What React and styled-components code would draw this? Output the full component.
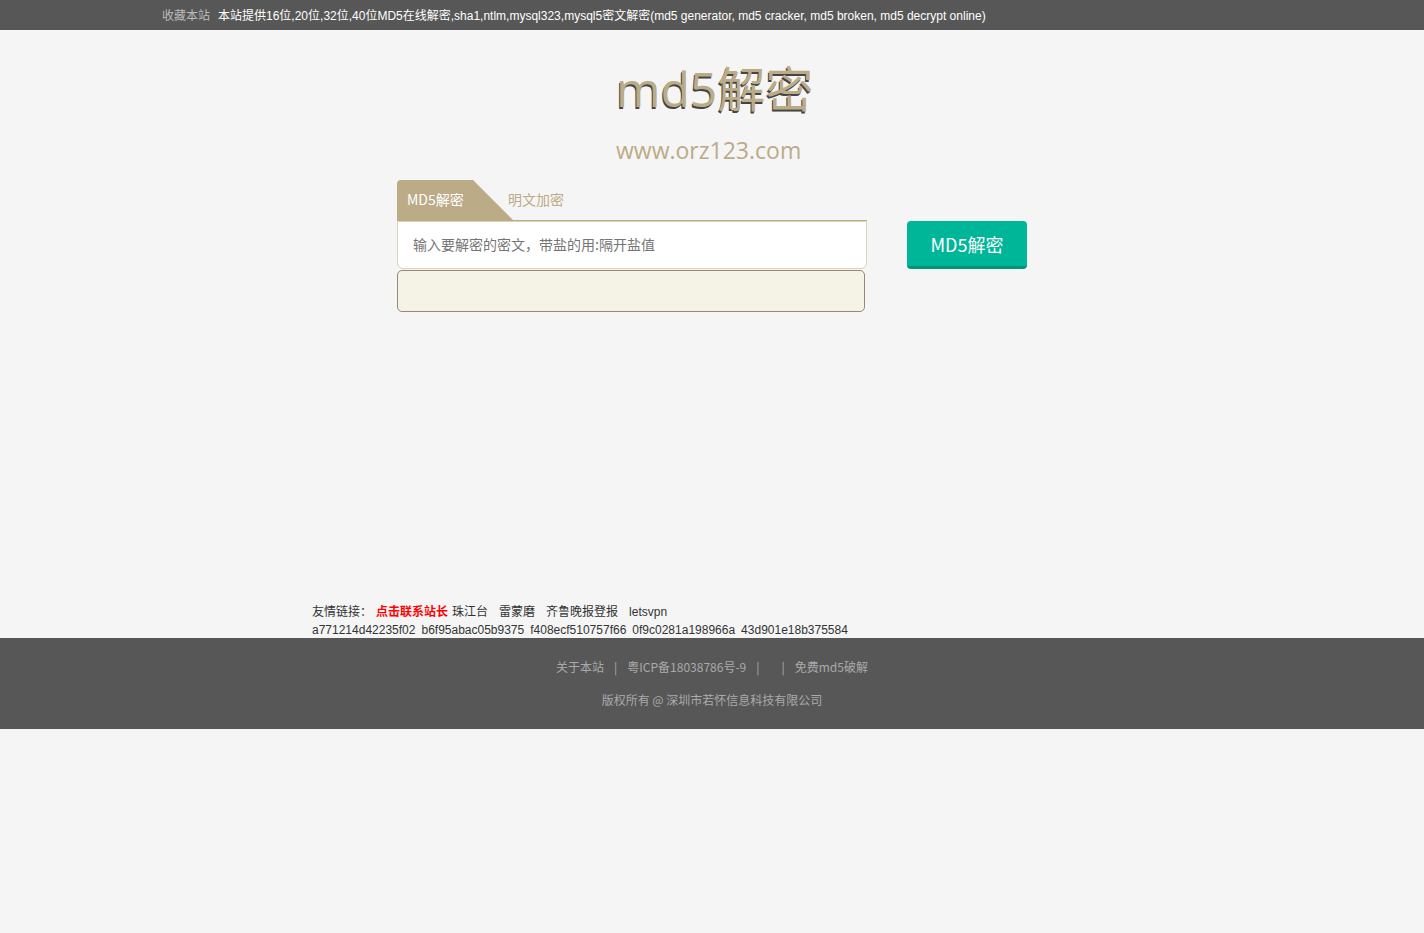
import React, { useState } from 'react';
import styled, { createGlobalStyle } from 'styled-components';

const GlobalStyle = createGlobalStyle`
  * {
    box-sizing: border-box;
  }

  body {
    margin: 0;
    background-color: #f5f5f5;
    color: #333;
    font-family: "Noto Sans CJK SC", sans-serif;
    font-size: 12px;
    line-height: 20px;
  }

  a {
    color: inherit;
    text-decoration: none;
  }

  button,
  input {
    font-family: inherit;
  }
`;

const TopBar = styled.header`
  height: 30px;
  background-color: #575757;
  color: #fff;
  font-family: "Liberation Sans", "Noto Sans CJK SC", sans-serif;
`;

const TopBarInner = styled.div`
  display: flex;
  gap: 8px;
  max-width: 1100px;
  margin: 0 auto;
  line-height: 32px;
  white-space: nowrap;
`;

const FavoriteLink = styled.a`
  color: #bbb;
`;

const Main = styled.main`
  max-width: 630px;
  min-height: 572px;
  margin: 0 auto;
  padding-top: 28px;
`;

const Logo = styled.h1`
  display: flex;
  flex-direction: column;
  width: 192px;
  height: 122px;
  margin: 0 auto;
  color: #bbab87;
  font-family: "Open Sans", "Noto Sans CJK SC", sans-serif;
  font-weight: 400;
  white-space: nowrap;
`;

const LogoName = styled.span`
  font-size: 48px;
  line-height: 62px;
  text-shadow: -1px 2px 0 #444;
`;

const LogoDomain = styled.span`
  font-size: 23px;
  line-height: 60px;
`;

const SearchForm = styled.form`
  display: flex;
  align-items: flex-end;
  justify-content: space-between;
`;

const SearchBox = styled.div`
  width: 470px;
`;

const Tabs = styled.div`
  display: flex;
  height: 41px;
  border-bottom: 1px solid #bbab87;
`;

const Tab = styled.button`
  width: 116px;
  height: 40px;
  padding: 0 0 2px 10px;
  border: none;
  border-radius: 4px 0 0 0;
  background-color: ${(props) => (props.$active ? '#bbab87' : 'transparent')};
  clip-path: polygon(0 0, 76px 0, 100% 100%, 0 100%);
  color: ${(props) => (props.$active ? '#fff' : '#bbab87')};
  font-size: 14px;
  text-align: left;
  cursor: pointer;

  & + & {
    margin-left: -15px;
  }
`;

const HashInput = styled.input`
  display: block;
  width: 100%;
  height: 48px;
  padding: 0 15px 2px;
  border: 1px solid #d9d3b8;
  border-radius: 0 0 6px 6px;
  background-color: #fff;
  color: #333;
  font-size: 14px;
  outline: none;

  &::placeholder {
    color: #757575;
    opacity: 1;
  }
`;

const SubmitButton = styled.button`
  width: 120px;
  height: 48px;
  padding: 0;
  border: none;
  border-bottom: 3px solid #009479;
  border-radius: 4px;
  background-color: #00b699;
  color: #fff;
  font-size: 18px;
  cursor: pointer;

  &:hover {
    background-color: #00a88d;
  }
`;

const Result = styled.output`
  display: block;
  width: 468px;
  height: 42px;
  margin-top: 1px;
  padding: 0 15px;
  border: 1px solid #998675;
  border-radius: 5px;
  background-color: #f4f3e6;
  font-size: 14px;
  line-height: 40px;
`;

const Links = styled.section`
  max-width: 800px;
  margin: 0 auto;
  font-family: "Liberation Sans", "Noto Sans CJK SC", sans-serif;
`;

const LinkRow = styled.div`
  display: flex;
  gap: ${(props) => props.$gap};
  height: 18px;
  white-space: nowrap;
`;

const ContactLink = styled.a`
  margin: 0 -7px;
  color: #f00;
  font-weight: 700;
`;

const Footer = styled.footer`
  height: 91px;
  padding-top: 12px;
  background-color: #575757;
  color: #aaa;
  text-align: center;
`;

const FooterRow = styled.p`
  display: flex;
  justify-content: center;
  gap: 10px;
  margin: 0;
  line-height: 33px;
`;

const EmptyItem = styled.span`
  width: 2px;
`;

const hashes = [
  'a771214d42235f02',
  'b6f95abac05b9375',
  'f408ecf510757f66',
  '0f9c0281a198966a',
  '43d901e18b375584',
];

const friends = ['珠江台', '雷蒙磨', '齐鲁晚报登报', 'letsvpn'];

function App() {
  const [tab, setTab] = useState('decrypt');
  const [text, setText] = useState('');

  return (
    <>
      <GlobalStyle />
      <TopBar>
        <TopBarInner>
          <FavoriteLink href="#">收藏本站</FavoriteLink>
          <span>
            本站提供16位,20位,32位,40位MD5在线解密,sha1,ntlm,mysql323,mysql5密文解密(md5 generator, md5 cracker, md5 broken, md5 decrypt online)
          </span>
        </TopBarInner>
      </TopBar>

      <Main>
        <Logo>
          <LogoName>md5解密</LogoName>
          <LogoDomain>www.orz123.com</LogoDomain>
        </Logo>
        <SearchForm onSubmit={(e) => e.preventDefault()}>
          <SearchBox>
            <Tabs>
              <Tab type="button" $active={tab === 'decrypt'} onClick={() => setTab('decrypt')}>
                MD5解密
              </Tab>
              <Tab type="button" $active={tab === 'encrypt'} onClick={() => setTab('encrypt')}>
                明文加密
              </Tab>
            </Tabs>
            <HashInput
              type="text"
              aria-label="密文"
              placeholder="输入要解密的密文，带盐的用:隔开盐值"
              value={text}
              onChange={(e) => setText(e.target.value)}
            />
          </SearchBox>
          <SubmitButton type="submit">MD5解密</SubmitButton>
        </SearchForm>
        <Result aria-label="结果" />
      </Main>

      <Links>
        <LinkRow $gap="11px">
          <span>友情链接：</span>
          <ContactLink href="#">点击联系站长</ContactLink>
          {friends.map((name) => (
            <a key={name} href="#">{name}</a>
          ))}
        </LinkRow>
        <LinkRow $gap="6px">
          {hashes.map((hash) => (
            <a key={hash} href="#">{hash}</a>
          ))}
        </LinkRow>
      </Links>

      <Footer>
        <FooterRow>
          <a href="#">关于本站</a>
          <span>|</span>
          <a href="#">粤ICP备18038786号-9</a>
          <span>|</span>
          <EmptyItem />
          <span>|</span>
          <a href="#">免费md5破解</a>
        </FooterRow>
        <FooterRow>版权所有 @ 深圳市若怀信息科技有限公司</FooterRow>
      </Footer>
    </>
  );
}

export default App;
